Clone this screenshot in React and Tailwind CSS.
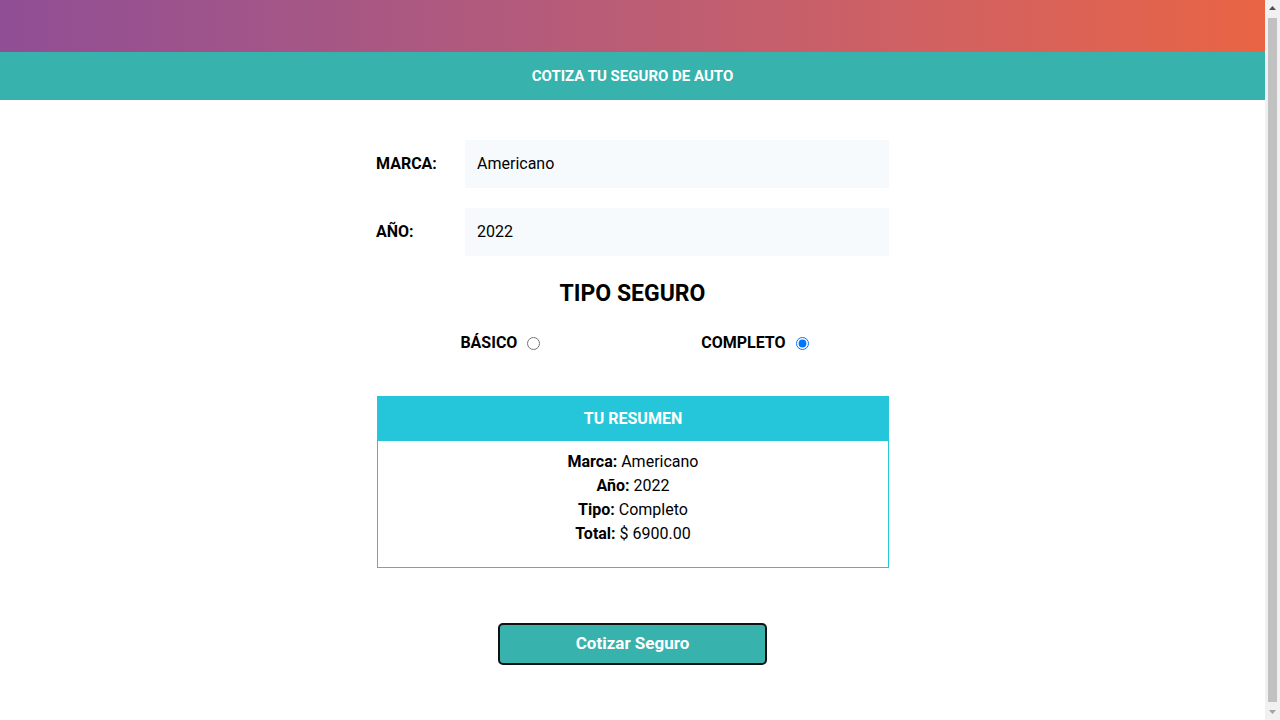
import React from 'react';

const Row = ({ label, value }) => (
  <div className="flex items-center">
    <label className="w-[89px] font-bold text-base">{label}</label>
    <div className="flex-1 h-12 bg-[#f7fafc] px-3 flex items-center text-base">{value}</div>
  </div>
);

const Radio = ({ label, checked }) => (
  <label className="flex items-center font-bold text-base">
    {label}
    <input type="radio" name="tipo" className="ml-[10px]" defaultChecked={checked} />
  </label>
);

// the browser's scrollbar, as seen in the reference
const Scrollbar = () => (
  <div className="w-[15px] h-[720px] bg-[#f1f1f1] flex flex-col items-center shrink-0">
    <svg width="15" height="17" viewBox="0 0 15 17">
      <path d="M4 10 L7.5 6 L11 10 Z" fill="#505050" />
    </svg>
    <div className="w-[9px] flex-1 bg-[#c1c1c1] my-px" />
    <svg width="15" height="17" viewBox="0 0 15 17">
      <path d="M4 7 L7.5 11 L11 7 Z" fill="#a3a3a3" />
    </svg>
  </div>
);

export default function App() {
  return (
    <div className="flex h-[720px] overflow-hidden bg-white text-black" style={{ fontFamily: 'Roboto, "Noto Sans", sans-serif' }}>
      <div className="w-[1265px] shrink-0">
        <div className="h-[52px] bg-gradient-to-r from-[#904e95] to-[#e96443]" />
        <header className="h-12 bg-[#38b2ac] flex items-center justify-center">
          <h1 className="text-white font-bold text-[15px] uppercase">Cotiza tu seguro de auto</h1>
        </header>

        <main className="w-[513px] mx-auto pt-10">
          <div className="flex flex-col gap-5">
            <Row label="MARCA:" value="Americano" />
            <Row label="AÑO:" value="2022" />
          </div>

          <h2 className="mt-[22px] text-center text-[23px] font-bold leading-8">TIPO SEGURO</h2>

          <div className="mt-[21px] flex justify-around h-6 pl-[4px]">
            <Radio label="BÁSICO" />
            <Radio label="COMPLETO" checked />
          </div>

          <div className="mt-[41px] ml-px border border-solid border-[color:#26c6da]">
            <div className="h-[44px] bg-[#26c6da] flex items-center justify-center text-white font-bold text-base">
              TU RESUMEN
            </div>
            <div className="pt-[9px] pb-[21px] text-center text-base leading-6">
              <p><span className="font-bold">Marca:</span> Americano</p>
              <p><span className="font-bold">Año:</span> 2022</p>
              <p><span className="font-bold">Tipo:</span> Completo</p>
              <p><span className="font-bold">Total:</span> $ 6900.00</p>
            </div>
          </div>

          <div className="mt-[55px] flex justify-center">
            <button className="w-[269px] h-[42px] bg-[#38b2ac] border-2 border-[#111] rounded-[5px] text-white font-bold text-[17px]">
              Cotizar Seguro
            </button>
          </div>
        </main>
      </div>
      <Scrollbar />
    </div>
  );
}
